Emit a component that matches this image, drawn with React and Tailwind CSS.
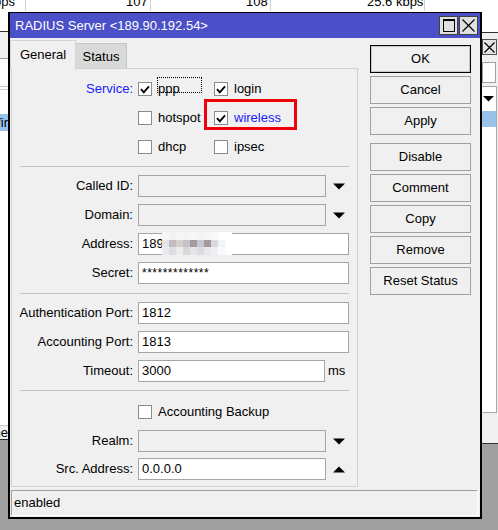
import React from "react";

const Check = () => (
  <svg width="10" height="9" viewBox="0 0 10 9">
    <path d="M1 4.2 L3.8 7.3 L9 1.3" fill="none" stroke="black" strokeWidth="1.9" />
  </svg>
);

function Box({ checked }) {
  return (
    <span className="flex h-[14px] w-[14px] shrink-0 items-center justify-center border border-[#8a8a8a] bg-white">
      {checked && <Check />}
    </span>
  );
}

const Down = () => (
  <svg width="12" height="7" viewBox="0 0 12 7" className="ml-[7px] shrink-0">
    <polygon points="0,0.5 12,0.5 6,6.5" fill="black" />
  </svg>
);
const Up = () => (
  <svg width="12" height="7" viewBox="0 0 12 7" className="ml-[7px] shrink-0">
    <polygon points="0,6.5 12,6.5 6,0.5" fill="black" />
  </svg>
);

function Label({ children }) {
  return (
    <div className="w-[121px] shrink-0 pr-0 text-right whitespace-nowrap leading-[22px]">{children}</div>
  );
}

function Field({ label, value, disabled, width = 211, after }) {
  return (
    <div className="flex h-[22px] items-center">
      <Label>{label}</Label>
      <div
        className={
          "ml-[5px] h-[22px] shrink-0 border border-[#a5a5a5] pl-[3px] leading-[20px] whitespace-nowrap " +
          (disabled ? "bg-[#f0f0f0]" : "bg-white")
        }
        style={{ width }}
      >
        {value}
      </div>
      {after}
    </div>
  );
}

function Sep({ className }) {
  return <div className={"ml-[8px] h-px w-[329px] bg-[#c4c4c4] " + className} />;
}

function Btn({ children, primary, className = "" }) {
  return (
    <div
      className={
        "flex h-[28px] w-[101px] items-center justify-center border bg-[#f0f0f0] " +
        (primary ? "border-black shadow-[inset_0_0_0_1px_#c8c8c8]" : "border-[#a0a0a0]") +
        " " +
        className
      }
    >
      {children}
    </div>
  );
}

const mosaic = [
  ["#f6f6f6", "#f2f2f2", "#f6f6f6", "#f4f4f4", "#f6f6f6", "#f4f4f4", "#f6f6f6", "#f8f8f8", "#ffffff", "#ffffff"],
  ["#e4e4ea", "#c4bcc4", "#d8d0c8", "#c6c2cc", "#a49a9e", "#c8c6d0", "#a39a9c", "#d8d8e0", "#eef4fa", "#ffffff"],
  ["#eaeaee", "#dedee2", "#ececec", "#d8d8dc", "#e6e4e8", "#dcdce0", "#e8e8ec", "#f0f0f2", "#f8fafc", "#ffffff"],
];

export default function App() {
  return (
    <div className="relative h-[530px] w-[498px] overflow-hidden bg-[#a0a0a0] font-['Liberation_Sans',Arial,sans-serif] text-[13px] text-black">
      {/* background table header */}
      <div className="absolute left-0 top-0 h-[32px] w-[498px] bg-white">
        <div className="absolute left-[-6px] top-[-6px] leading-[15px]">ops</div>
        <div className="absolute left-[25px] top-0 h-[11px] w-px bg-[#d0d0d0]" />
        <div className="absolute left-[126px] top-[-6px] leading-[15px]">107</div>
        <div className="absolute left-[150px] top-0 h-[11px] w-px bg-[#d0d0d0]" />
        <div className="absolute left-[246px] top-[-6px] leading-[15px]">108</div>
        <div className="absolute left-[270px] top-0 h-[11px] w-px bg-[#d0d0d0]" />
        <div className="absolute left-[367px] top-[-6px] leading-[15px]">25.6 kbps</div>
        <div className="absolute left-[424px] top-0 h-[11px] w-px bg-[#d0d0d0]" />
      </div>

      {/* left background window */}
      <div className="absolute left-[-200px] top-[31px] flex h-[409px] w-[220px] flex-col border-t border-b border-[#303030] bg-white">
        <div className="h-[27px] border-b border-[#a0a0a0] bg-[#f0f0f0]" />
        <div className="h-[28px] border-b border-[#c8c8c8]" />
        <div className="mt-[2px] h-px bg-[#d0d0d0]" />
        <div className="mt-[24px] flex h-[17px] items-center justify-end bg-[#99c2ea] pr-[12px] leading-[17px]">
          <span>Wir</span>
        </div>
        <div className="flex-1" />
        <div className="flex h-[14px] items-center justify-end border-t border-[#c8c8c8] bg-[#f0f0f0] pr-[12px] leading-[14px]">
          <span>Name</span>
        </div>
      </div>

      {/* right background window */}
      <div className="absolute left-[470px] top-[32px] flex h-[412px] w-[40px] flex-col border-t border-b border-[#303030] bg-[#f0f0f0]">
        <div className="ml-[12px] mt-[6px] flex h-[16px] w-[15px] items-center justify-center border border-[#505050] bg-[#e4e4e4]">
          <svg width="11" height="11" viewBox="0 0 11 11">
            <path d="M0.5 0.5 L10.5 10.5 M10.5 0.5 L0.5 10.5" stroke="black" strokeWidth="1.2" />
          </svg>
        </div>
        <div className="ml-[12px] mt-[7px] h-[21px] w-[14px] border border-[#a0a0a0] bg-white" />
        <div className="ml-[11px] mt-[3px] flex h-[327px] w-[16px] flex-col border border-[#a8a8a8] bg-white">
          <div className="flex h-[24px] items-center pl-[1px]">
            <svg width="11" height="6" viewBox="0 0 11 6">
              <polygon points="0,0 11,0 5.5,5.5" fill="black" />
            </svg>
          </div>
          <div className="h-[16px] bg-[#99c2ea]" />
        </div>
      </div>

      {/* dialog */}
      <div className="absolute left-[8px] top-[12px] flex h-[507px] w-[474px] flex-col border-t border-r-2 border-b-2 border-l-2 border-black bg-[#f0f0f0]">
        {/* title bar */}
        <div className="flex h-[25px] shrink-0 items-center bg-[#4b50c8] pl-[5px] pr-[2px]">
          <span className="text-white whitespace-nowrap">RADIUS Server &lt;189.90.192.54&gt;</span>
          <div className="ml-auto flex gap-px">
            <div className="flex h-[19px] w-[19px] items-center justify-center border border-[#404040] bg-[#e0e0e0]">
              <div className="h-[13px] w-[12px] border border-black border-t-2" />
            </div>
            <div className="flex h-[19px] w-[19px] items-center justify-center border border-[#404040] bg-[#e0e0e0]">
              <svg width="13" height="13" viewBox="0 0 13 13">
                <path d="M0.5 0.5 L12.5 12.5 M12.5 0.5 L0.5 12.5" stroke="black" strokeWidth="1.2" />
              </svg>
            </div>
          </div>
        </div>

        {/* body */}
        <div className="flex flex-1 flex-col">
          <div className="flex">
            {/* left column */}
            <div className="flex w-[348px] flex-col pt-[2px]">
              <div className="flex h-[28px] items-end">
                <div className="relative z-10 -mb-px flex h-[29px] w-[66px] items-center justify-center border-t border-l border-r border-[#d4d4d4] bg-[#f0f0f0]">
                  General
                </div>
                <div className="flex h-[25px] w-[51px] items-center justify-center border-t border-r border-[#c4c4c4] bg-[#d9d9d9] pt-[2px]">
                  Status
                </div>
              </div>
              <div className="ml-px flex h-[419px] w-[347px] flex-col border border-[#d0d0d0] pt-[9px]">
                {/* service checkboxes */}
                <div className="flex h-[22px] items-center">
                  <Label>
                    <span className="text-[#1a1aff]">Service:</span>
                  </Label>
                  <div className="ml-[5px] flex w-[76px] items-center">
                    <Box checked />
                    <span className="relative ml-[6px]">
                      ppp
                      <span className="absolute left-[-1px] top-[-2px] h-[16px] w-[45px] border border-dotted border-black" />
                    </span>
                  </div>
                  <div className="flex items-center">
                    <Box checked />
                    <span className="ml-[6px]">login</span>
                  </div>
                </div>
                <div className="mt-[7px] flex h-[22px] items-center">
                  <Label />
                  <div className="ml-[5px] flex w-[76px] items-center">
                    <Box />
                    <span className="ml-[6px]">hotspot</span>
                  </div>
                  <div className="relative flex items-center">
                    <Box checked />
                    <span className="ml-[6px] text-[#1a1aff]">wireless</span>
                    <span className="absolute left-[-10px] top-[-9px] h-[31px] w-[93px] border-[3px] border-[#f0000a]" />
                  </div>
                </div>
                <div className="mt-[7px] flex h-[22px] items-center">
                  <Label />
                  <div className="ml-[5px] flex w-[76px] items-center">
                    <Box />
                    <span className="ml-[6px]">dhcp</span>
                  </div>
                  <div className="flex items-center">
                    <Box />
                    <span className="ml-[6px]">ipsec</span>
                  </div>
                </div>

                <Sep className="mt-[8px]" />

                <div className="mt-[8px] flex flex-col gap-[7px]">
                  <Field label="Called ID:" disabled width={188} after={<Down />} />
                  <Field label="Domain:" disabled width={188} after={<Down />} />
                  <div className="relative">
                    <Field label="Address:" value="189" />
                    <div className="absolute left-[150px] top-[-1px] grid grid-cols-[repeat(10,7px)] grid-rows-[8px_7px_8px]">
                      {mosaic.flat().map((c, i) => (
                        <div key={i} style={{ backgroundColor: c }} />
                      ))}
                    </div>
                  </div>
                  <Field label="Secret:" value={<span className="text-[12px] tracking-[0.5px]">*************</span>} />
                </div>

                <Sep className="mt-[9px]" />

                <div className="mt-[8px] flex flex-col gap-[7px]">
                  <Field label="Authentication Port:" value="1812" />
                  <Field label="Accounting Port:" value="1813" />
                  <Field label="Timeout:" value="3000" width={187} after={<span className="ml-[3px]">ms</span>} />
                </div>

                <Sep className="mt-[8px]" />

                <div className="mt-[10px] flex h-[22px] items-center">
                  <Label />
                  <div className="ml-[5px] flex items-center">
                    <Box />
                    <span className="ml-[6px]">Accounting Backup</span>
                  </div>
                </div>
                <div className="mt-[7px]">
                  <Field label="Realm:" disabled width={188} after={<Down />} />
                </div>
                <div className="mt-[6px]">
                  <Field label="Src. Address:" value="0.0.0.0" width={188} after={<Up />} />
                </div>
              </div>
            </div>

            {/* buttons */}
            <div className="ml-[12px] mt-[7px] flex flex-col gap-[3px]">
              <Btn primary>OK</Btn>
              <Btn>Cancel</Btn>
              <Btn>Apply</Btn>
              <Btn className="mt-[5px]">Disable</Btn>
              <Btn>Comment</Btn>
              <Btn>Copy</Btn>
              <Btn>Remove</Btn>
              <Btn>Reset Status</Btn>
            </div>
          </div>

          {/* status bar */}
          <div className="mb-px ml-px mr-[2px] mt-[3px] flex h-[26px] items-center border-t border-l border-[#a0a0a0] border-r border-r-white border-b border-b-white pl-[2px]">
            enabled
          </div>
        </div>
      </div>
    </div>
  );
}
